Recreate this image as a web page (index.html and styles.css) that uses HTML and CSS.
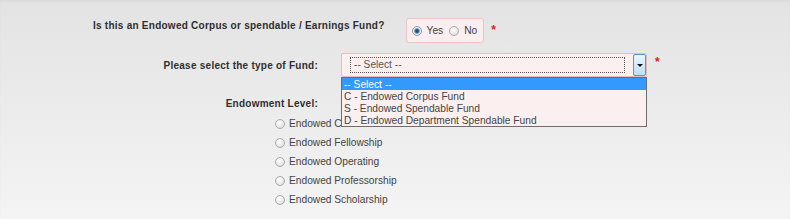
FILE: index.html
```html
<!DOCTYPE html>
<html lang="en">
<head>
    <meta charset="UTF-8">
    <title>Endowment Fund</title>
    <link rel="stylesheet" href="styles.css">
</head>
<body>
    <div class="page">
        <div class="row row-fund">
            <label class="q-label">Is this an Endowed Corpus or spendable / Earnings Fund?</label>
            <div class="radio-box">
                <span class="radio checked"></span><span class="opt">Yes</span>
                <span class="radio"></span><span class="opt">No</span>
            </div>
            <span class="req">*</span>
        </div>

        <div class="row row-type">
            <label class="field-label">Please select the type of Fund:</label>
            <div class="select-wrap">
                <div class="select">
                    <span class="select-value">-- Select --</span>
                    <span class="select-btn"><span class="arrow"></span></span>
                </div>
                <ul class="select-list">
                    <li class="active">-- Select --</li>
                    <li>C - Endowed Corpus Fund</li>
                    <li>S - Endowed Spendable Fund</li>
                    <li>D - Endowed Department Spendable Fund</li>
                </ul>
            </div>
            <span class="req req-select">*</span>
        </div>

        <div class="row row-level">
            <label class="field-label">Endowment Level:</label>
        </div>
        <ul class="level-list">
            <li><span class="radio"></span>Endowed Chair</li>
            <li><span class="radio"></span>Endowed Fellowship</li>
            <li><span class="radio"></span>Endowed Operating</li>
            <li><span class="radio"></span>Endowed Professorship</li>
            <li><span class="radio"></span>Endowed Scholarship</li>
        </ul>
    </div>
</body>
</html>
```

FILE: styles.css
```css
/* General */
body {
    margin: 0;
    font-family: 'Liberation Sans', Arial, sans-serif;
    font-size: 10px;
    color: #333;
}

.page {
    height: 219px;
    padding-top: 18px;
    box-sizing: border-box;
    background: linear-gradient(#e3e3e3, #f4f4f4);
    box-shadow: inset 0 2px 2px rgba(0, 0, 0, 0.04);
    overflow: hidden;
}

.row {
    display: flex;
    align-items: flex-start;
}

/* Labels */
.q-label,
.field-label {
    font-weight: bold;
    letter-spacing: 0.25px;
    line-height: 13px;
    color: #2f2f2f;
}

.q-label {
    margin-left: 93px;
    margin-top: 1px;
}

.field-label {
    width: 318px;
    text-align: right;
    flex-shrink: 0;
}

.req {
    color: #e02020;
    font-size: 12px;
    line-height: 12px;
    font-weight: bold;
}

/* Yes / No */
.radio-box {
    display: flex;
    align-items: center;
    height: 25px;
    box-sizing: border-box;
    margin-left: 21px;
    padding: 0 6px 0 5px;
    background: #fbeeee;
    border: 1px solid #f0c4c4;
    border-radius: 3px;
    font-size: 10.2px;
    color: #444;
}

.radio-box .opt {
    margin-left: 5px;
}

.radio-box .opt + .radio {
    margin-left: 6px;
}

.row-fund .req {
    margin-left: 7px;
    margin-top: 6px;
}

.radio {
    display: inline-block;
    width: 8px;
    height: 8px;
    border: 1px solid #ababab;
    border-radius: 50%;
    background: radial-gradient(circle at 40% 35%, #fff, #d6d6d6);
    flex-shrink: 0;
}

.radio.checked {
    border-color: #8a9bb0;
    background: radial-gradient(circle, #1d4a7a 0, #2a5a8c 1.5px, #8fa9c4 2.5px, #f0f0f0 3.5px);
}

/* Fund type select */
.row-type {
    margin-top: 10px;
    align-items: center;
}

.select-wrap {
    position: relative;
    margin-left: 23px;
}

.select {
    display: flex;
    align-items: center;
    width: 306px;
    height: 24px;
    box-sizing: border-box;
    background: #fcefef;
    border: 1px solid #eab9b9;
    border-radius: 2px;
}

.select-value {
    flex: 1;
    margin: 0 8px 0 8px;
    padding: 1px 3px;
    height: 12px;
    line-height: 12px;
    border: 1px dotted #555;
    font-size: 10.2px;
    color: #555;
}

.select-btn {
    display: flex;
    align-items: center;
    justify-content: center;
    width: 13px;
    height: 22px;
    box-sizing: border-box;
    border: 1px solid #5c95c8;
    border-radius: 2px;
    background: linear-gradient(#eaf6fd, #bfe0f5);
}

.arrow {
    width: 0;
    height: 0;
    border-left: 3px solid transparent;
    border-right: 3px solid transparent;
    border-top: 3px solid #111;
}

.select-list {
    position: absolute;
    top: 24px;
    left: 0;
    width: 306px;
    box-sizing: border-box;
    margin: 0;
    padding: 0;
    list-style: none;
    background: #fcefef;
    border: 1px solid #6d6d6d;
    font-size: 10.2px;
    color: #444;
}

.select-list li {
    height: 12px;
    line-height: 13px;
    padding-left: 2px;
}

.select-list li.active {
    background: #3399ff;
    color: #fff;
}

.req-select {
    align-self: flex-start;
    margin-left: 8px;
    margin-top: 3px;
}

/* Endowment level */
.row-level {
    margin-top: 17px;
}

.row-level .field-label {
    line-height: 19px;
}

.level-list {
    margin: 1px 0 0;
    padding-left: 275px;
    list-style: none;
    font-size: 10.2px;
    color: #444;
}

.level-list li {
    display: flex;
    align-items: center;
    height: 19px;
}

.level-list .radio {
    margin-right: 4px;
}
```
